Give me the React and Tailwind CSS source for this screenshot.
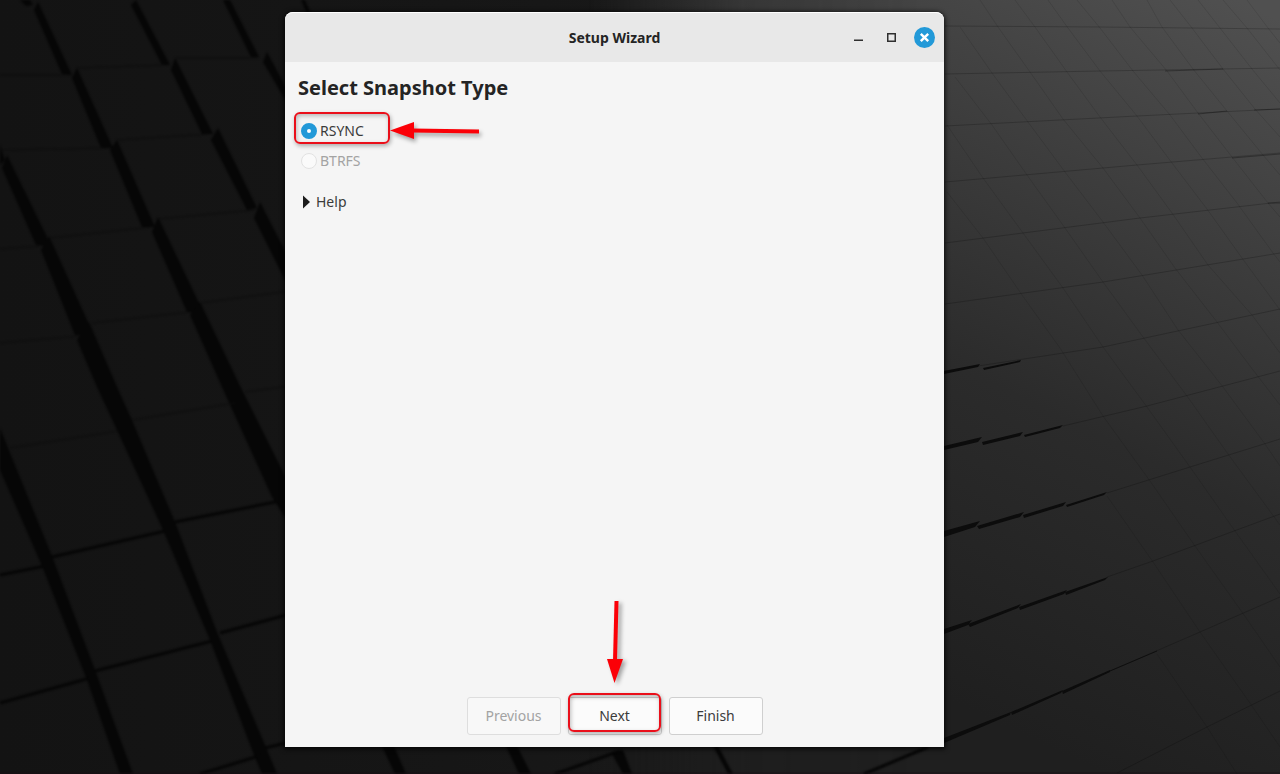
import React, { useState } from 'react';

// Dark gaps between the raised tiles on the left side of the wallpaper
const leftGaps = [
    '20,0 30,0 33,5 26,6',
    '38,2 72,75 62,74 34,10',
    '77,68 113,148 101,148 72,78',
    '117,140 155,227 142,227 110,150',
    '158,217 200,305 201,313 187,312 152,232',
    '200,302 242,390 290,486 290,525 272,497 222,387 190,315',
    '0,145 5,160 0,165',
    '7,155 47,237 46,246 36,245 2,168',
    '49,236 88,322 88,335 75,335 41,250',
    '89,322 117,387 131,418 175,522 217,632 265,745 277,774 262,774 254,755 210,640 163,530 117,430 97,387 77,340',
    '0,428 8,448 52,556 95,670 133,774 120,774 87,680 42,566 0,470',
    '136,0 170,65 162,65 131,5',
    '175,58 213,134 202,134 171,70',
    '218,128 257,208 247,210 211,140',
    '260,202 300,280 300,310 254,218',
    '230,0 259,57 251,57 223,0',
    '267,52 290,95 290,108 263,62',
    '301,0 305,0 311,14 307,14',
    '381,744 393,744 406,774 395,774',
    '505,744 516,744 531,774 519,774',
    '611,752 623,750 632,774 623,774',
    '712,744 717,744 733,774 728,774',
];

const faintEdges = [
    'M0 75H72', 'M77 68L168 65', 'M176 58H258', 'M0 150L110 148', 'M117 140L210 134',
    'M0 249L40 246', 'M50 238L152 227', 'M158 219L255 210', 'M0 343L80 336',
    'M92 323L190 312', 'M200 303L290 291', 'M10 448L118 431', 'M132 420L235 403', 'M245 392L290 386',
];

const strongEdges = [
    'M0 575L45 566', 'M52 557L165 531', 'M175 522L290 499', 'M0 703L90 678', 'M95 671L212 641',
    'M220 633L290 614', 'M200 774L262 755', 'M265 748L290 742', 'M555 774L620 751', 'M864 774L928 747',
];

// Seams of the flat tiles on the right side
const rows = [
    '945,26 1100,27 1280,29',
    '945,74 1100,71 1280,68',
    '945,126 1137,116 1280,109',
    '945,182 1137,165 1280,153',
    '945,243 1140,218 1280,202',
    '945,304 1103,282 1280,253',
    '945,371 1103,347 1280,309',
    '1063,426 1147,406 1223,386 1280,371',
    '1107,493 1190,467 1280,439',
    '1107,577 1153,561 1280,514',
    '1110,671 1200,632 1280,597',
    '1117,773 1207,727 1280,691',
];

const columns = [
    '1247,0 1268,28 1280,43',
    '1223,0 1247,28 1280,70',
    '1198,0 1220,28 1252,69 1280,103',
    '1170,0 1192,28 1223,69 1255,109 1280,137',
    '1147,0 1162,27 1193,69 1227,111 1263,155 1280,175',
    '1112,0 1130,27 1167,71 1198,113 1232,157 1268,203 1280,217',
    '1077,0 1100,28 1133,71 1170,115 1202,158 1237,203 1273,253 1280,262',
    '1048,0 1068,28 1100,71 1137,116 1172,163 1207,209 1242,258 1280,310',
    '1015,0 1035,27 1067,72 1100,117 1137,165 1172,213 1208,265 1252,315 1280,353',
    '980,0 998,27 1030,72 1063,119 1103,168 1140,218 1175,268 1217,322 1253,370 1280,405',
    '960,27 992,73 1028,122 1065,172 1103,222 1142,275 1178,330 1223,387 1265,444 1280,466',
    '955,77 992,125 1027,175 1065,228 1103,282 1143,337 1187,396 1228,454 1272,514 1280,525',
    '947,125 983,178 1023,233 1063,288 1103,347 1147,407 1190,467 1235,531 1280,594',
    '947,192 983,238 1022,295 1060,348 1103,416 1150,481 1195,546 1242,612 1280,667',
    '1107,496 1153,562 1200,632 1252,706 1280,747',
    '1157,654 1207,727 1237,774',
];

const rightGaps = [
    '944,371 980,364 978,367 944,374',
    '983,368 1021,360 1020,362 984,370',
    '944,446 982,437 978,442 944,450',
    '982,442 1023,432 1020,436 983,445',
    '1024,435 1063,425 1060,428 1025,437',
    '944,531 980,521 975,527 944,537',
    '977,526 1024,512 1020,517 979,529',
    '1023,515 1066,502 1063,506 1024,518',
    '1066,505 1107,492 1104,495 1067,507',
    '944,629 972,620 968,625 944,634',
    '968,624 1021,604 1018,608 970,627',
    '1019,607 1067,590 1064,594 1020,610',
    '1065,592 1108,577 1105,580 1066,595',
    '944,738 1011,712 1010,715 944,743',
    '1011,712 1063,690 1061,693 1012,715',
    '1062,691 1110,670 1110,672 1063,694',
];

const Wallpaper = () => (
    <svg
        className="absolute inset-0 -z-10 h-full w-full"
        viewBox="0 0 1280 774"
        preserveAspectRatio="xMidYMid slice"
        aria-hidden="true"
    >
        <defs>
            <linearGradient id="dark" x1="0" y1="0" x2="1" y2="0">
                <stop offset="0" stopColor="#131313" />
                <stop offset="0.35" stopColor="#161616" />
                <stop offset="1" stopColor="#1f1f1f" />
            </linearGradient>
            <linearGradient id="light" gradientUnits="userSpaceOnUse" x1="1280" y1="20" x2="950" y2="700">
                <stop offset="0" stopColor="#505050" />
                <stop offset="0.3" stopColor="#3d3d3d" />
                <stop offset="0.6" stopColor="#2b2b2b" />
                <stop offset="1" stopColor="#1f1f1f" />
            </linearGradient>
            <linearGradient id="fade" x1="0" y1="0" x2="1" y2="0">
                <stop offset="0.46" stopColor="#fff" stopOpacity="0" />
                <stop offset="0.58" stopColor="#fff" stopOpacity="0.8" />
                <stop offset="0.72" stopColor="#fff" stopOpacity="1" />
            </linearGradient>
            <mask id="side" maskUnits="userSpaceOnUse" x="0" y="0" width="1280" height="774">
                <rect width="1280" height="774" fill="url(#fade)" />
            </mask>
            <filter id="soft" colorInterpolationFilters="sRGB">
                <feGaussianBlur stdDeviation="1" />
            </filter>
        </defs>
        <rect width="1280" height="774" fill="url(#dark)" />
        <rect width="1280" height="774" fill="url(#light)" mask="url(#side)" />
        <g filter="url(#soft)">
            {leftGaps.map((points) => <polygon key={points} points={points} fill="#060606" />)}
            {faintEdges.map((d) => <path key={d} d={d} stroke="#0d0d0d" strokeWidth="1" />)}
            {strongEdges.map((d) => <path key={d} d={d} stroke="#060606" strokeWidth="3" />)}
        </g>
        <g fill="none" stroke="#000">
            {rows.map((points) => <polyline key={points} points={points} strokeOpacity="0.2" />)}
            {columns.map((points) => <polyline key={points} points={points} strokeOpacity="0.1" />)}
            <path d="M1165 71L1223 69M1198 114L1227 111M1254 110L1280 109M1232 158L1280 154M1268 203H1280" strokeOpacity="0.3" />
            <path d="M1110 671L1157 651" strokeOpacity="0.5" />
        </g>
        {rightGaps.map((points) => <polygon key={points} points={points} fill="#0c0c0c" />)}
        <path d="M0 773H1280" stroke="#1a0c14" strokeOpacity="0.6" />
    </svg>
);

const TitleBar = () => (
    <header className="relative flex h-[50px] shrink-0 items-center justify-end gap-3 rounded-t-lg border-t border-white bg-[#e8e8e8] px-[9px]">
        <h1 className="absolute inset-x-0 text-center text-sm font-bold">Setup Wizard</h1>
        <button type="button" aria-label="Minimize" className="relative flex size-[21px] items-center justify-center">
            <svg width="11" height="11" viewBox="0 0 11 11">
                <path d="M1 8.25H10" stroke="#2f2f2f" strokeWidth="1.5" />
            </svg>
        </button>
        <button type="button" aria-label="Maximize" className="relative flex size-[21px] items-center justify-center">
            <svg width="11" height="11" viewBox="0 0 11 11">
                <rect x="1.75" y="1.75" width="7.5" height="7.5" fill="none" stroke="#2f2f2f" strokeWidth="1.5" />
            </svg>
        </button>
        <button type="button" aria-label="Close" className="relative flex size-[21px] items-center justify-center rounded-full bg-[#2299d8]">
            <svg width="11" height="11" viewBox="0 0 11 11">
                <path d="M1.8 1.8L9.2 9.2M9.2 1.8L1.8 9.2" stroke="#fff" strokeWidth="2.4" />
            </svg>
        </button>
    </header>
);

const TypeOption = ({ value, selected, onSelect, disabled = false }) => (
    <label className={`flex h-[30px] items-center gap-[3px] text-sm ${disabled ? 'text-[#a3a3a3]' : 'text-[#3b3b3b]'}`}>
        <input
            type="radio"
            name="snapshotType"
            value={value}
            checked={selected === value}
            onChange={() => onSelect(value)}
            disabled={disabled}
            className="size-4 appearance-none rounded-full border border-[#e2e2e2] bg-[#fafafa] checked:border-[6px] checked:border-[#2299d8] checked:bg-white"
        />
        {value}
    </label>
);

const Arrow = ({ className, width, height, d, shaft }) => (
    <svg className={className} width={width} height={height} viewBox={`0 0 ${width} ${height}`} aria-hidden="true">
        <path d={shaft} stroke="#fb0007" strokeWidth="4" />
        <path d={d} fill="#fb0007" />
    </svg>
);

const WizardButton = ({ children, disabled = false }) => (
    <button
        type="button"
        disabled={disabled}
        className="h-[38px] w-[94px] rounded-[3px] border border-[#cfcfcf] bg-[#fbfbfb] text-sm text-[#3b3b3b] disabled:border-[#dedede] disabled:bg-[#f8f8f8] disabled:text-[#a3a3a3]"
    >
        {children}
    </button>
);

const App = () => {
    const [snapshotType, setSnapshotType] = useState('RSYNC');

    return (
        <div className="relative isolate flex min-h-screen overflow-hidden bg-[#151515] pt-3 pb-[27px] pl-[285px] font-['Noto_Sans',sans-serif] text-[#242424]">
            <Wallpaper />
            <main className="flex w-[659px] flex-col rounded-t-lg bg-[#f5f5f5] shadow-[0_1px_5px_1px_rgba(0,0,0,0.8)]">
                <TitleBar />
                <section className="flex-1 px-[13px] pt-[10px]">
                    <h2 className="text-xl leading-8 font-bold">Select Snapshot Type</h2>
                    <div className="relative mt-3 pl-[3px]">
                        <TypeOption value="RSYNC" selected={snapshotType} onSelect={setSnapshotType} />
                        <TypeOption value="BTRFS" selected={snapshotType} onSelect={setSnapshotType} disabled />
                        {/* Highlight over the first option */}
                        <span className="pointer-events-none absolute -top-1 -left-1 h-8 w-24 rounded-[6px] border-2 border-[#ea0f1a] shadow-[1px_2px_4px_rgba(0,0,0,0.3),inset_1px_2px_4px_rgba(0,0,0,0.25)]" />
                        <Arrow
                            className="pointer-events-none absolute top-1 left-[92px] drop-shadow-[2px_3px_2px_rgba(0,0,0,0.35)]"
                            width={90}
                            height={20}
                            shaft="M22 10.5L89 11.5"
                            d="M0 10.5L24 2V19Z"
                        />
                    </div>
                    <details className="mt-[11px] pl-[5px] text-sm text-[#3b3b3b]">
                        <summary className="flex h-[30px] list-none items-center gap-[6px]">
                            <svg width="7" height="14" viewBox="0 0 7 14" aria-hidden="true">
                                <path d="M0 0.5L7 7L0 13.5Z" fill="#1c1c1c" />
                            </svg>
                            Help
                        </summary>
                    </details>
                </section>
                <footer className="flex justify-center gap-[7px] pb-3">
                    <WizardButton disabled>Previous</WizardButton>
                    <div className="relative">
                        <WizardButton>Next</WizardButton>
                        <span className="pointer-events-none absolute -top-1 left-0 h-[39px] w-[93px] rounded-[6px] border-2 border-[#ea0f1a] shadow-[1px_2px_4px_rgba(0,0,0,0.3),inset_1px_2px_4px_rgba(0,0,0,0.25)]" />
                        <Arrow
                            className="pointer-events-none absolute -top-24 left-9 drop-shadow-[3px_2px_2px_rgba(0,0,0,0.35)]"
                            width={20}
                            height={82}
                            shaft="M12.5 0L11 60"
                            d="M3 58H19L10.5 82Z"
                        />
                    </div>
                    <WizardButton>Finish</WizardButton>
                </footer>
            </main>
        </div>
    );
};

export default App;
